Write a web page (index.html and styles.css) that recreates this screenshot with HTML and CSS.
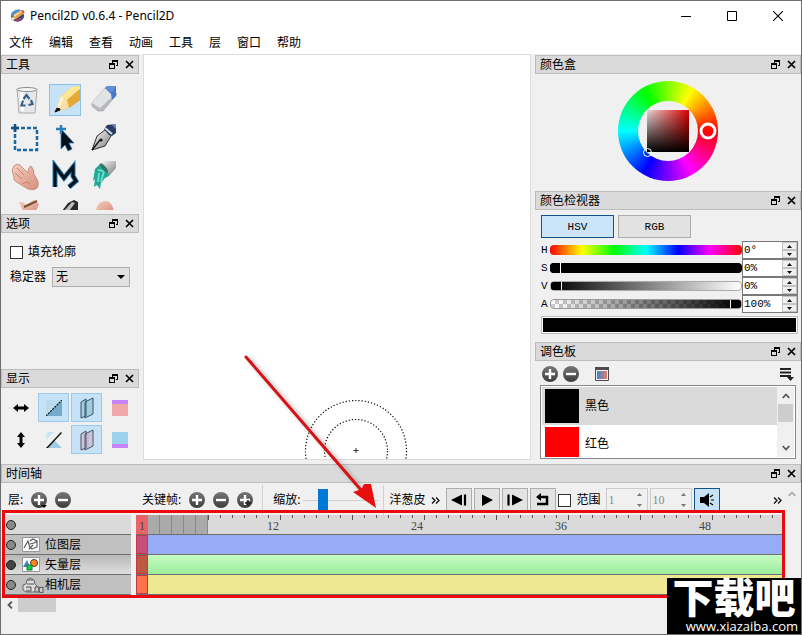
FILE: index.html
```html
<!DOCTYPE html>
<html lang="zh-CN">
<head>
<meta charset="utf-8">
<title>Pencil2D v0.6.4 - Pencil2D</title>
<link rel="stylesheet" href="styles.css">
</head>
<body>
<svg class="defs" aria-hidden="true">
  <defs>
    <linearGradient id="steel" x1="0" y1="0" x2="1" y2="1"><stop offset="0" stop-color="#fff"/><stop offset="1" stop-color="#777"/></linearGradient>
    <linearGradient id="gold" x1="0" y1="0" x2="1" y2="1"><stop offset="0" stop-color="#ffe9a0"/><stop offset=".5" stop-color="#f2c14a"/><stop offset="1" stop-color="#b9770c"/></linearGradient>
    <linearGradient id="skin" x1="0" y1="0" x2="1" y2="1"><stop offset="0" stop-color="#f8cdbc"/><stop offset="1" stop-color="#d58e7c"/></linearGradient>
    <linearGradient id="disc" x1="0" y1="0" x2="0" y2="1"><stop offset="0" stop-color="#777"/><stop offset="1" stop-color="#3c3c3c"/></linearGradient>
    <symbol id="float" viewBox="0 0 9 9"><path d="M3 0h6v6H7V5h1V2H4v1H3zM0 3h6v6H0zM1 5v3h4V5z" fill="#000" fill-rule="evenodd"/></symbol>
    <symbol id="close" viewBox="0 0 9 9"><path d="M1 1l7 7M8 1L1 8" stroke="#000" stroke-width="1.7"/></symbol>
    <symbol id="plus" viewBox="0 0 16 16"><circle cx="8" cy="8" r="8" fill="url(#disc)"/><path d="M8 3v10M3 8h10" stroke="#fff" stroke-width="2.4"/></symbol>
    <symbol id="minus" viewBox="0 0 16 16"><circle cx="8" cy="8" r="8" fill="url(#disc)"/><path d="M3 8h10" stroke="#fff" stroke-width="2.4"/></symbol>
    <symbol id="more" viewBox="0 0 9 7"><path d="M1 0.500l3 3-3 3M5 .5l3 3-3 3" fill="none" stroke="#111" stroke-width="1.300"/></symbol>
    <symbol id="up" viewBox="0 0 5 3"><path d="M0 3h5L2.500 0z" fill="currentColor"/></symbol>
    <symbol id="down" viewBox="0 0 5 3"><path d="M0 0h5L2.500 3z" fill="currentColor"/></symbol>
    <symbol id="chevron" viewBox="0 0 8 6"><path d="M.7 5L4 1.500 7.300 5" fill="none" stroke="currentColor" stroke-width="1.800"/></symbol>
  </defs>
</svg>

<div class="window">
  <header class="titlebar">
    <svg class="app-icon" viewBox="0 0 16 14"><ellipse cx="8" cy="7" rx="7" ry="6" fill="#244a88"/><path d="M2 3Q8-2 12 1L5 6 1 8z" fill="#5794cf"/><path d="M1 12L4 6 12 1Q16 0 15 4L7 10z" fill="#f39a32"/><path d="M4 6l8-5 1 1-8 6z" fill="#ffd99b"/><path d="M12 1Q16 0 15 4l-3-2z" fill="#e24a3b"/><path d="M1 12l1-4 4 2z" fill="#e9e0d0"/><path d="M5 12q6 2 9-4l-7 3z" fill="#b6405d"/></svg>
    <h1>Pencil2D v0.6.4 - Pencil2D</h1>
    <div class="window-buttons">
      <button aria-label="最小化"><svg viewBox="0 0 10 10"><path d="M0 5.500h10" stroke="#000"/></svg></button>
      <button aria-label="最大化"><svg viewBox="0 0 10 10"><path d="M.5.5h9v9h-9z" fill="none" stroke="#000"/></svg></button>
      <button aria-label="关闭"><svg viewBox="0 0 10 10"><path d="M0 0l10 10M10 0L0 10" stroke="#000" stroke-width="1.100"/></svg></button>
    </div>
  </header>
  <nav class="menubar">
    <button>文件</button><button>编辑</button><button>查看</button><button>动画</button><button>工具</button><button>层</button><button>窗口</button><button>帮助</button>
  </nav>

  <main class="workspace">
    <div class="column">
      <section class="dock dock-tools">
        <header class="dock-title"><h2>工具</h2><button aria-label="浮动"><svg><use href="#float"/></svg></button><button aria-label="关闭"><svg><use href="#close"/></svg></button></header>
        <div class="tool-grid">
          <button aria-label="清除"><svg viewBox="0 0 32 32"><path d="M7 5h20l-2 24H9z" fill="#e5e7e8" stroke="#999" stroke-width=".8"/><path d="M10 8h3l1 19h-3z" fill="#fff"/><ellipse cx="17" cy="5.500" rx="10" ry="2" fill="#f7f7f7" stroke="#8d8d8d"/><path d="M13.500 15l3-4 3 4M21 16l1.500 4-4 1M15.500 21.500h-4l1.500-5" fill="none" stroke="#355f88" stroke-width="2.200"/></svg></button>
          <button class="on" aria-label="铅笔"><svg viewBox="0 0 32 32"><path d="M6 28L12 12 23 3 31 2v14L20 24z" fill="url(#gold)"/><path d="M12 12L23 3l8-1v3L18 16z" fill="#ffe694"/><path d="M18 16L31 5v11L20 24z" fill="#e3aa35"/><path d="M6 28l6-16 6 4 2 8z" fill="#f8dfa8"/><path d="M6 28l6-16 3 2-5 12z" fill="#fff0c9"/><path d="M6 28l2-4 3 1 0 1z" fill="#111" stroke="#111"/></svg></button>
          <button aria-label="橡皮擦"><svg viewBox="0 0 32 32"><path d="M4 19L17 4l12 6-14 17-5 0-6-5z" fill="#b8babd" stroke="#999" stroke-width=".6"/><path d="M4 19L17 4l10 6-15 14z" fill="#e2e3e5"/><path d="M17 4l2-2h9v10l-4 4-1-6z" fill="#4778cb"/><path d="M17 4l2-2h9l-4 7z" fill="#618fda"/></svg></button>
          <button aria-label="选择"><svg viewBox="0 0 32 32"><path d="M5 6h22v22H5z" fill="none" stroke="#1b69a4" stroke-width="2.500" stroke-dasharray="4 2"/><path d="M5 2v8M1 6h8" stroke="#164e84" stroke-width="2.500"/></svg></button>
          <button aria-label="移动"><svg viewBox="0 0 32 32"><path d="M12 7v20l4-4 3 6 4-2-3-6h5z" fill="#071018" stroke="#2880bb" stroke-width=".8"/><path d="M12 3v9M7 7h10" stroke="#2780bd" stroke-width="2.500"/></svg></button>
          <button aria-label="钢笔"><svg viewBox="0 0 32 32"><path d="M4 28L9 14l8-6 6 6-6 10z" fill="url(#steel)" stroke="#333"/><path d="M4 28l8-10" stroke="#111" stroke-width="1.300"/><circle cx="13" cy="18" r="1.600" fill="#111"/><path d="M16 7l3-4 9-1v9l-4 3-3-1z" fill="#263c6b"/><path d="M17 6l7 6" stroke="#ddd" stroke-width="2"/><path d="M23 2h5v5z" fill="#8280b7"/></svg></button>
          <button aria-label="手形"><svg viewBox="0 0 32 32"><path d="M4 6q4-4 8 1l6 6q0-6 3-7 3 3 3 8l4 7q1 5-1 7-3 3-9 1l-5-3-8-5q-2-2-1-4l-1-3q-2-5 1-8z" fill="url(#skin)" stroke="#b97a6b" stroke-width=".7"/><path d="M7 8l7 7M5 13l7 6M12 24l5-2 3 2" fill="none" stroke="#c68573"/></svg></button>
          <button aria-label="折线"><svg viewBox="0 0 32 32"><path d="M6 27V6l9 12 9-11v9l3 5-7 6" fill="none" stroke="#277bb8" stroke-width="5"/><path d="M6 27V6l9 12 9-11v9l3 5-7 6" fill="none" stroke="#081018" stroke-width="3"/></svg></button>
          <button aria-label="油漆桶"><svg viewBox="0 0 32 32"><path d="M11 3l3-2h14v7l-7 8z" fill="url(#steel)"/><path d="M7 9l5-5 7 5 2 7-4 2-4 5-1 6-3-4-3 2 1-8-2 2z" fill="#20aa96"/><path d="M10 10l6 1-3 11M11 13l-1 9" stroke="#68ddc9" stroke-width="2" fill="none"/><ellipse cx="16" cy="8" rx="6" ry="2" transform="rotate(50 16 8)" fill="#35776f"/></svg></button>
          <button aria-label="涂抹"><svg viewBox="0 0 32 32"><path d="M9 4q4-1 7 3l8-5 5 4-4 10H14z" fill="url(#skin)"/><path d="M14 9L27 3" stroke="#795035" stroke-width="2"/></svg></button>
          <button aria-label="画笔"><svg viewBox="0 0 32 32"><path d="M10 17L19 5l6-3 4 2v14z" fill="#292929"/><path d="M14 14l9-10 3 1-8 11z" fill="#bbb"/></svg></button>
          <button aria-label="吸管"><svg viewBox="0 0 32 32"><path d="M8 12q1-8 9-9 8 0 9 12z" fill="url(#skin)"/></svg></button>
        </div>
      </section>

      <section class="dock dock-options">
        <header class="dock-title"><h2>选项</h2><button aria-label="浮动"><svg><use href="#float"/></svg></button><button aria-label="关闭"><svg><use href="#close"/></svg></button></header>
        <div class="options">
          <label class="check"><input type="checkbox">填充轮廓</label>
          <div class="field"><label for="stab">稳定器</label><div class="select"><select id="stab"><option>无</option></select></div></div>
        </div>
      </section>

      <section class="dock dock-display">
        <header class="dock-title"><h2>显示</h2><button aria-label="浮动"><svg><use href="#float"/></svg></button><button aria-label="关闭"><svg><use href="#close"/></svg></button></header>
        <div class="display-grid">
          <button aria-label="水平翻转"><svg viewBox="0 0 16 16"><path d="M0 8l5-4v2.500h6V4l5 4-5 4V9.500H5V12z"/></svg></button>
          <button class="on" aria-label="细线"><svg viewBox="0 0 16 16"><path d="M0 0h16v16H0z" fill="#b9dbec"/><path d="M16 0v16H0z" fill="#76a9ca"/><path d="M0 16L16 0" stroke="#111" stroke-width="1.200" stroke-dasharray="2 1"/></svg></button>
          <button class="on wide" aria-label="洋葱皮前"><svg viewBox="0 0 16 22"><path d="M2 5l5-3v17l-5 2zM6 5l8-4v16l-8 4z" fill="#a5cbe0" stroke="#34556b"/></svg></button>
          <button aria-label="顶部叠加"><svg viewBox="0 0 16 16"><path d="M0 0h16v16H0z" fill="#f1a8a9"/><path d="M0 0h16v4H0z" fill="#c783fb"/></svg></button>
          <button aria-label="垂直翻转"><svg viewBox="0 0 16 16"><path d="M8 0l4 5H9.500v6H12l-4 5-4-5h2.500V5H4z"/></svg></button>
          <button aria-label="轮廓"><svg viewBox="0 0 16 16"><path d="M1 0h7l-8 8z" fill="#c4e5f5"/><path d="M8 8l8 8H0z" fill="#9bcbe5"/><path d="M0 16L15 0l1 1L2 16z" fill="#111"/></svg></button>
          <button class="on wide" aria-label="洋葱皮后"><svg viewBox="0 0 16 22"><path d="M2 5l5-3v17l-5 2zM6 5l8-4v16l-8 4z" fill="#c9c7de" stroke="#4e5266"/><path d="M9 5v13" stroke="#d98fc0" stroke-dasharray="2 1"/></svg></button>
          <button aria-label="底部叠加"><svg viewBox="0 0 16 16"><path d="M0 0h16v16H0z" fill="#9dd2ef"/><path d="M0 12h16v4H0z" fill="#c783fb"/></svg></button>
        </div>
      </section>
    </div>

    <section class="canvas" aria-label="画布">
      <svg class="brush" viewBox="0 0 104 60"><g fill="none" stroke="#000" stroke-width="1.200" stroke-dasharray="1.200 2"><circle cx="52" cy="52" r="50.500"/><circle cx="52" cy="52" r="31.500"/></g><path d="M49.500 51.500h5M52 49v5" stroke="#333"/></svg>
    </section>

    <div class="column">
      <section class="dock dock-wheel">
        <header class="dock-title"><h2>颜色盒</h2><button aria-label="浮动"><svg><use href="#float"/></svg></button><button aria-label="关闭"><svg><use href="#close"/></svg></button></header>
        <div class="wheel"><div class="hole"><div class="shade"></div></div>
          <svg class="markers" viewBox="0 0 100 100"><circle cx="90" cy="50" r="7" fill="none" stroke="#fff" stroke-width="3"/><circle cx="29.500" cy="71.500" r="4" fill="none" stroke="#fff"/></svg>
        </div>
      </section>

      <section class="dock dock-inspector">
        <header class="dock-title"><h2>颜色检视器</h2><button aria-label="浮动"><svg><use href="#float"/></svg></button><button aria-label="关闭"><svg><use href="#close"/></svg></button></header>
        <div class="inspector">
          <div class="modes"><button class="on">HSV</button><button>RGB</button></div>
          <div class="channel"><label for="h">H</label><input id="h" class="range hue" type="range" min="0" max="359" value="0"><div class="spin"><input type="text" value="0°" aria-label="色相"><button aria-label="增加"><svg><use href="#up"/></svg></button><button aria-label="减少"><svg><use href="#down"/></svg></button></div></div>
          <div class="channel"><label for="s">S</label><input id="s" class="range sat" type="range" value="0"><div class="spin"><input type="text" value="0%" aria-label="饱和度"><button aria-label="增加"><svg><use href="#up"/></svg></button><button aria-label="减少"><svg><use href="#down"/></svg></button></div></div>
          <div class="channel"><label for="v">V</label><input id="v" class="range val" type="range" value="0"><div class="spin"><input type="text" value="0%" aria-label="明度"><button aria-label="增加"><svg><use href="#up"/></svg></button><button aria-label="减少"><svg><use href="#down"/></svg></button></div></div>
          <div class="channel"><label for="a">A</label><input id="a" class="range alpha" type="range" value="100"><div class="spin"><input type="text" value="100%" aria-label="透明度"><button aria-label="增加"><svg><use href="#up"/></svg></button><button aria-label="减少"><svg><use href="#down"/></svg></button></div></div>
          <div class="preview"></div>
        </div>
      </section>

      <section class="dock dock-palette">
        <header class="dock-title"><h2>调色板</h2><button aria-label="浮动"><svg><use href="#float"/></svg></button><button aria-label="关闭"><svg><use href="#close"/></svg></button></header>
        <div class="palette-tools">
          <button aria-label="添加颜色"><svg><use href="#plus"/></svg></button>
          <button aria-label="移除颜色"><svg><use href="#minus"/></svg></button>
          <button class="picker" aria-label="系统颜色"><svg viewBox="0 0 14 14"><defs><linearGradient id="pic"><stop offset="0" stop-color="#3a86d2"/><stop offset="1" stop-color="#e87967"/></linearGradient></defs><path d="M.5.5h13v13H.5z" fill="#f5f5f5" stroke="#51484a"/><path d="M0 0h14v3H0z" fill="#51484a"/><path d="M2 4h10v8H2z" fill="url(#pic)"/></svg></button>
          <button class="menu" aria-label="菜单"><svg viewBox="0 0 14 14"><path d="M0 2h11M0 5.500h11M0 9h11" stroke="#222" stroke-width="2"/><path d="M7 10h7l-3.500 4z" fill="#222"/></svg></button>
        </div>
        <div class="palette-list">
          <ul><li class="on"><span class="swatch black"></span>黑色</li><li><span class="swatch red"></span>红色</li></ul>
          <div class="vscroll"><svg><use href="#chevron"/></svg><i></i><svg class="flip"><use href="#chevron"/></svg></div>
        </div>
      </section>
    </div>
  </main>

  <section class="timeline">
    <header class="dock-title"><h2>时间轴</h2><button aria-label="浮动"><svg><use href="#float"/></svg></button><button aria-label="关闭"><svg><use href="#close"/></svg></button></header>
    <div class="timeline-body">
      <div class="timeline-main">
        <div class="toolbar">
          <div class="layer-tools"><span>层:</span>
            <button class="round" aria-label="添加层"><svg><use href="#plus"/></svg><i class="drop"></i></button>
            <button class="round" aria-label="删除层"><svg><use href="#minus"/></svg></button></div>
          <div class="key-tools"><span>关键帧:</span>
            <button class="round" aria-label="添加帧"><svg><use href="#plus"/></svg></button>
            <button class="round" aria-label="删除帧"><svg><use href="#minus"/></svg></button>
            <button class="round" aria-label="复制帧"><svg viewBox="0 0 16 16"><use href="#plus"/><path d="M11 8v6M8 11h6" stroke="#222" stroke-width="1.500"/></svg></button></div>
          <div class="zoom-tools"><label for="zoom">缩放:</label><input id="zoom" type="range" min="0" max="100" value="22"></div>
          <div class="play-tools"><span>洋葱皮</span><button class="more" aria-label="更多"><svg><use href="#more"/></svg></button>
            <button class="play" aria-label="上一帧"><svg viewBox="0 0 18 14"><path d="M1 7l11-5.500v11z"/><path d="M15 1.500v11" stroke="#000" stroke-width="2.200"/></svg></button>
            <button class="play" aria-label="播放"><svg viewBox="0 0 18 14"><path d="M4 1.500L15 7 4 13z"/></svg></button>
            <button class="play" aria-label="下一帧"><svg viewBox="0 0 18 14"><path d="M6 1.500L17 7 6 12.500z"/><path d="M2.500 1.500v11" stroke="#000" stroke-width="2.200"/></svg></button>
            <button class="play" aria-label="循环"><svg viewBox="0 0 18 14"><path d="M5 4h8v7H3" fill="none" stroke="#000" stroke-width="2.500"/><path d="M2 4l5-4v8z"/></svg></button>
            <label class="check"><input type="checkbox">范围</label>
            <div class="spin off"><input type="text" value="1" aria-label="起始帧" disabled><button disabled aria-label="增加"><svg><use href="#up"/></svg></button><button disabled aria-label="减少"><svg><use href="#down"/></svg></button></div>
            <div class="spin off"><input type="text" value="10" aria-label="结束帧" disabled><button disabled aria-label="增加"><svg><use href="#up"/></svg></button><button disabled aria-label="减少"><svg><use href="#down"/></svg></button></div>
            <button class="play on" aria-label="声音"><svg viewBox="0 0 18 14"><path d="M2 4h4l5-4v14l-5-4H2z"/><path d="M12 4l3-2M13 7h3M12 10l3 2" stroke="#000" stroke-width="1.200"/></svg></button>
          </div>
          <button class="more end" aria-label="更多"><svg><use href="#more"/></svg></button>
        </div>

        <div class="score">
          <div class="layers">
            <div class="layer head"><i class="dot"></i></div>
            <div class="layer"><i class="dot"></i><svg viewBox="0 0 18 15"><path d="M.5.5h17v14H.5z" fill="#fafafa" stroke="#999"/><path d="M2 11l4-7 2 7M8 11l2 1 5-2V4l-4-2-3 2M8 7l4-1 3-2M11 8l-4 4" fill="none" stroke="#555" stroke-width="1.100"/></svg>位图层</div>
            <div class="layer active"><i class="dot dark"></i><svg viewBox="0 0 18 15"><path d="M.5.5h17v14H.5z" fill="#fafafa" stroke="#999"/><path d="M1 10l4-7 3 7z" fill="#4d7fc4"/><circle cx="12" cy="6" r="3.500" fill="#ff8b17" stroke="#533"/><path d="M5 8h5v5H5z" fill="#0bd632" stroke="#174"/></svg>矢量层</div>
            <div class="layer"><i class="dot"></i><svg class="cam" viewBox="0 0 22 16"><path d="M1 13V8l3-1 1-4 3-2 4 2 1 4 2 2v5l-3 1H4z" fill="#ddd" stroke="#666"/><path d="M5 7h7M5 3h6M4 10h5v4H4M13 10h4v5h-4zM17 11l4-1v6l-4-1z" fill="#ccc" stroke="#555"/></svg>相机层</div>
          </div>
          <div class="tracks">
            <div class="ruler"><span class="cur">1</span><span class="passed"></span><div class="marks"><span>12</span><span>24</span><span>36</span><span>48</span></div></div>
            <div class="track bitmap"><i></i></div>
            <div class="track vector"><i></i></div>
            <div class="track camera"><i></i></div>
          </div>
          <div class="highlight"></div>
        </div>
        <div class="hscroll"><svg><use href="#chevron"/></svg><i></i></div>
      </div>
      <div class="side-scroll"><svg><use href="#chevron"/></svg></div>
    </div>
  </section>

  <svg class="pointer" viewBox="0 0 140 160" aria-hidden="true"><path d="M5 6L121 140" stroke="#555" stroke-width="4" opacity=".35" transform="translate(3 1)" filter="blur(2px)"/><path d="M5 5L120 138" stroke="#da1014" stroke-width="3" stroke-linecap="round"/><path d="M135 156L112 140 118 138 121 136 123 132 130 132z" fill="#e8100f"/></svg>
  <div class="watermark"><strong>下载吧</strong><span>www.xiazaiba.com</span></div>
</div>
</body>
</html>
```
FILE: styles.css
```css
* { box-sizing: border-box; }

body {
  margin: 0;
  font: 12px/16px "Noto Sans", "Noto Sans CJK SC", sans-serif;
  color: #000;
  background: #f0f0f0;
}

h1, h2, ul { margin: 0; padding: 0; font-size: 12px; font-weight: 400; }
button { margin: 0; padding: 0; border: 0; background: none; color: inherit; font: inherit; }
input, select { margin: 0; font: inherit; color: inherit; }
svg { display: block; flex: none; }
.defs { position: absolute; width: 0; height: 0; }

.window {
  position: relative;
  display: flex;
  flex-direction: column;
  height: 100vh;
  min-height: 560px;
  border: 1px solid #6e6e6e;
  overflow: hidden;
}

/* Title bar and menu */
.titlebar { display: flex; align-items: center; height: 29px; padding-left: 9px; background: #fff; }
.app-icon { width: 15px; height: 14px; margin-right: 5px; }
.titlebar h1 { flex: 1; }
.window-buttons { display: flex; }
.window-buttons button { display: grid; place-items: center; width: 46px; height: 29px; }
.window-buttons svg { width: 10px; height: 10px; }
.menubar { display: flex; gap: 16px; height: 24px; padding: 2px 8px 0; background: #fff; align-items: center; }

/* Docks */
.workspace { flex: 1; min-height: 0; display: grid; grid-template-columns: 138px 1fr 266px; gap: 4px; }
.column { display: flex; flex-direction: column; gap: 4px; min-height: 0; padding-top: 1px; }
.dock { min-height: 0; overflow: hidden; }
.dock-tools { flex: 155 1 0; }
.dock-options { flex: 151 1 0; }
.dock-display { flex: 91 1 0; }
.dock-wheel { flex: 132 1 0; }
.dock-inspector { flex: 147 1 0; }
.dock-palette { flex: 118 1 0; display: flex; flex-direction: column; }

.dock-title {
  display: flex;
  align-items: center;
  gap: 7px;
  height: 19px;
  flex: none;
  padding: 0 4px;
  background: #dadada;
  border: 1px solid #bcbcbc;
}
.dock-title h2 { flex: 1; }
.dock-title svg { width: 9px; height: 9px; }

.canvas { position: relative; background: #fff; border: 1px solid #dcdcdc; overflow: hidden; }
.brush { position: absolute; left: calc(50% - 33px); bottom: 0; width: 104px; height: 60px; }

.tool-grid { display: grid; grid-template-columns: repeat(3, 32px); gap: 6px 7px; padding: 10px 9px; }
.tool-grid button { display: grid; place-content: center; width: 32px; height: 32px; border: 1px solid transparent; }
.tool-grid svg { width: 32px; height: 32px; }
.on { background: #c5e2f6; }
.tool-grid .on { border-color: #8cc0e8; }

.options { display: grid; gap: 7px; padding: 11px 9px; }
.check { display: flex; align-items: center; gap: 5px; }
.check input { appearance: none; width: 13px; height: 13px; border: 1px solid #333; background: #fff; }
.field { display: flex; align-items: center; gap: 6px; }
.select { position: relative; flex: 0 0 78px; }
.select select { appearance: none; display: block; width: 100%; height: 20px; padding: 0 3px; border: 1px solid #adadad; border-radius: 0; background: #e2e2e2; line-height: 16px; }
.select::after { content: ""; position: absolute; right: 5px; top: 8px; border: 4px solid transparent; border-top-color: #000; border-bottom: 0; }

.display-grid { display: grid; grid-template-columns: repeat(4, 31px); gap: 3px 2px; padding: 5px 4px; }
.display-grid button { display: grid; place-items: center; height: 29px; border: 1px solid transparent; }
.display-grid .on { border-color: #9ecbed; }
.display-grid svg { width: 16px; height: 16px; }
.display-grid .wide svg { height: 22px; }

/* Colour wheel */
.wheel {
  position: relative;
  display: grid;
  place-items: center;
  width: 100px;
  height: 100px;
  margin: 7px auto 0;
  border-radius: 50%;
  background: conic-gradient(from 90deg, #f00, #f0f, #00f, #0ff, #0f0, #ff0, #f00);
}
.hole { display: grid; place-items: center; width: 60px; height: 60px; border-radius: 50%; background: #f0f0f0; }
.shade { width: 42px; height: 42px; background: linear-gradient(transparent, #000), linear-gradient(90deg, #e8d8d8, #e00000); }
.markers { position: absolute; inset: 0; }

/* Colour inspector */
.inspector { padding: 5px 3px 0 6px; }
.modes { display: flex; gap: 4px; margin-bottom: 3px; }
.modes button { width: 73px; height: 23px; border: 1px solid #adadad; background: #e2e2e2; font: 11px "Liberation Mono", monospace; }
.modes .on { background: #cce4f7; border-color: #15518c; }
.channel { display: flex; align-items: center; height: 18px; font: 11px "Liberation Mono", monospace; }
.channel label { width: 9px; }
.range { appearance: none; flex: 1; min-width: 0; height: 10px; border-radius: 4px; overflow: hidden; }
.range::-webkit-slider-thumb { appearance: none; width: 11px; height: 10px; background: #000; border-right: 1px solid #fff; }
.hue { background: linear-gradient(90deg, #f00, #ff0, #0f0, #0ff, #00f, #f0f, #f00); }
.hue::-webkit-slider-thumb { opacity: 0; }
.sat { background: #000; }
.val { border: 1px solid #aaa; background: linear-gradient(90deg, #000, #fff); }
.alpha { border: 1px solid #999; background: linear-gradient(90deg, transparent, #000), repeating-conic-gradient(#ccc 0 25%, #fff 0 50%) 0 0 / 8px 8px; }
.alpha::-webkit-slider-thumb { border-right: 0; border-left: 1px solid #fff; }

.spin {
  display: grid;
  grid-template: 1fr 1fr / 1fr 15px;
  width: 56px;
  height: 18px;
  border: 1px solid #7a7a7a;
  background: #fff;
}
.spin input { grid-row: span 2; width: 100%; min-width: 0; padding: 0 1px; border: 0; background: none; }
.spin button { display: grid; place-items: center; border: 1px solid #c4c4c4; background: #f0f0f0; color: #111; }
.spin svg { width: 5px; height: 3px; }
.preview { height: 18px; margin-top: 3px; border: 1px solid #bbb; outline: 1px solid #fff; outline-offset: -2px; background: #000; }

/* Palette */
.palette-tools { display: flex; align-items: center; gap: 5px; height: 24px; flex: none; padding: 1px 7px 0; }
.palette-tools svg { width: 16px; height: 16px; }
.palette-tools .picker { margin-left: 11px; }
.palette-tools .picker svg, .palette-tools .menu svg { width: 14px; height: 14px; }
.palette-tools .menu { margin-left: auto; }
.palette-list { flex: 1; min-height: 0; display: flex; margin: 0 5px 1px; border: 1px solid #828790; background: #fff; padding: 1px; }
.palette-list ul { flex: 1; list-style: none; overflow: hidden; }
.palette-list li { display: flex; align-items: center; gap: 6px; height: 38px; padding-left: 3px; }
.palette-list .on { background: #dadada; }
.swatch { width: 34px; height: 34px; }
.black { background: #000; }
.red { background: #f00; }
.vscroll { display: flex; flex-direction: column; align-items: center; width: 17px; padding: 6px 0; background: #f0f0f0; color: #555; }
.vscroll svg { width: 8px; height: 6px; }
.vscroll i { width: 15px; height: 18px; margin-top: 5px; background: #cdcdcd; }
.vscroll .flip { margin-top: auto; transform: rotate(180deg); }

/* Timeline */
.timeline { flex: none; margin-top: 4px; }
.timeline-body { display: flex; }
.timeline-main { flex: 1; min-width: 0; padding-bottom: 22px; }
.toolbar { display: flex; align-items: center; height: 32px; padding-top: 2px; overflow: hidden; }
.toolbar > div { display: flex; align-items: center; height: 100%; }
.round { position: relative; width: 16px; height: 16px; }
.round svg { width: 16px; height: 16px; }
.drop { position: absolute; right: 0; bottom: 0; border: 3px solid transparent; border-top-color: #000; border-bottom: 0; }
.layer-tools { width: 141px; gap: 8px; padding-left: 7px; }
.key-tools { gap: 8px; padding-right: 9px; border-right: 1px solid #d2d2d2; }
.zoom-tools { gap: 3px; margin-left: 10px; padding-right: 5px; border-right: 1px solid #d2d2d2; }
.zoom-tools input { appearance: none; width: 75px; height: 22px; background: linear-gradient(#d0d0d0, #d0d0d0) center / 100% 1px no-repeat; }
.zoom-tools input::-webkit-slider-thumb { appearance: none; width: 10px; height: 22px; background: #0078d7; }
.play-tools { gap: 2px; padding-left: 5px; }
.more { margin: 0 4px; }
.more svg { width: 9px; height: 7px; }
.more.end { margin: 0 2px 0 auto; }
.play { display: grid; place-items: center; width: 26px; height: 24px; border: 1px solid #adadad; background: #e3e3e3; }
.play svg { width: 18px; height: 14px; }
.play.on { border-color: #15518c; background: #c5e2f6; }
.play-tools .spin { width: 42px; height: 24px; border-color: #ccc; background: #f0f0f0; color: #888; font: 12px "Liberation Serif", serif; }
.play-tools .spin button { border: 0; color: #777; }
.play-tools .check + .spin { margin-left: 4px; }

.score { position: relative; display: flex; gap: 5px; padding: 0 2px 0 1px; }
.layers { width: 129px; }
.layer { display: flex; align-items: center; gap: 5px; height: 20px; padding-left: 4px; border-bottom: 1px solid #6f6f6f; background: #c0c0c0; }
.layer.head { background: #dadada; }
.layer.active { background: linear-gradient(#b8b8b8, #dedede); }
.layer svg { width: 18px; height: 15px; margin-left: 1px; }
.layer .cam { width: 22px; height: 16px; margin-right: -4px; }
.dot { width: 10px; height: 10px; border: 1px solid #222; border-radius: 50%; background: #888; }
.dot.dark { background: #444; }
.tracks { flex: 1; min-width: 0; }
.ruler {
  position: relative;
  display: flex;
  height: 20px;
  overflow: hidden;
  border-bottom: 1px solid #6f6f6f;
  background:
    repeating-linear-gradient(90deg, #555 0 1px, transparent 1px 72px) 0 0 / 100% 5px no-repeat,
    repeating-linear-gradient(90deg, #555 0 1px, transparent 1px 12px) 0 0 / 100% 3px no-repeat,
    #dadada;
  font: 12px/22px "Liberation Serif", serif;
  color: #444;
}
.cur { width: 12px; background: #e86468; text-align: center; }
.passed { width: 60px; background: repeating-linear-gradient(90deg, #aaa 0 11px, #888 11px 12px); }
.marks { position: absolute; inset: 0; display: flex; }
.marks span { flex: 0 0 144px; padding-right: 1px; text-align: right; }
.track { display: flex; height: 20px; border-bottom: 1px solid #6f6f6f; }
.track i { width: 12px; border: 1px solid #9b2636; outline: 1px solid rgba(230, 80, 80, 0.5); outline-offset: -1px; }
.bitmap { background: #96acf4; }
.bitmap i { background: #c65079; }
.vector { background: linear-gradient(#c6fbc1, #9bed9b); }
.vector i { background: #bd5842; }
.camera { background: #eee893; }
.camera i { background: #ff714a; }
.highlight { position: absolute; inset: -5px -1px -3px 1px; border: 3px solid #ea0a0d; }
.hscroll { display: flex; align-items: center; height: 17px; padding: 3px 5px 0; color: #555; }
.hscroll svg { width: 8px; height: 6px; transform: rotate(-90deg); }
.hscroll i { width: 38px; height: 14px; margin-left: 4px; background: #cdcdcd; }
.side-scroll { width: 17px; padding: 8px 4px; color: #aaa; }
.side-scroll svg { width: 8px; height: 6px; }

/* Overlays */
.pointer { position: absolute; left: 240px; top: 351px; width: 140px; height: 160px; }
.watermark {
  position: absolute;
  right: 0;
  bottom: 0;
  display: flex;
  flex-direction: column;
  align-items: center;
  width: 134px;
  background: #000;
  color: #fff;
}
.watermark strong { padding-bottom: 6px; font: 900 41px/34px "Noto Sans CJK SC", sans-serif; }
.watermark span { align-self: flex-end; padding-right: 3px; font: 13px/16px "Open Sans", sans-serif; }
```
